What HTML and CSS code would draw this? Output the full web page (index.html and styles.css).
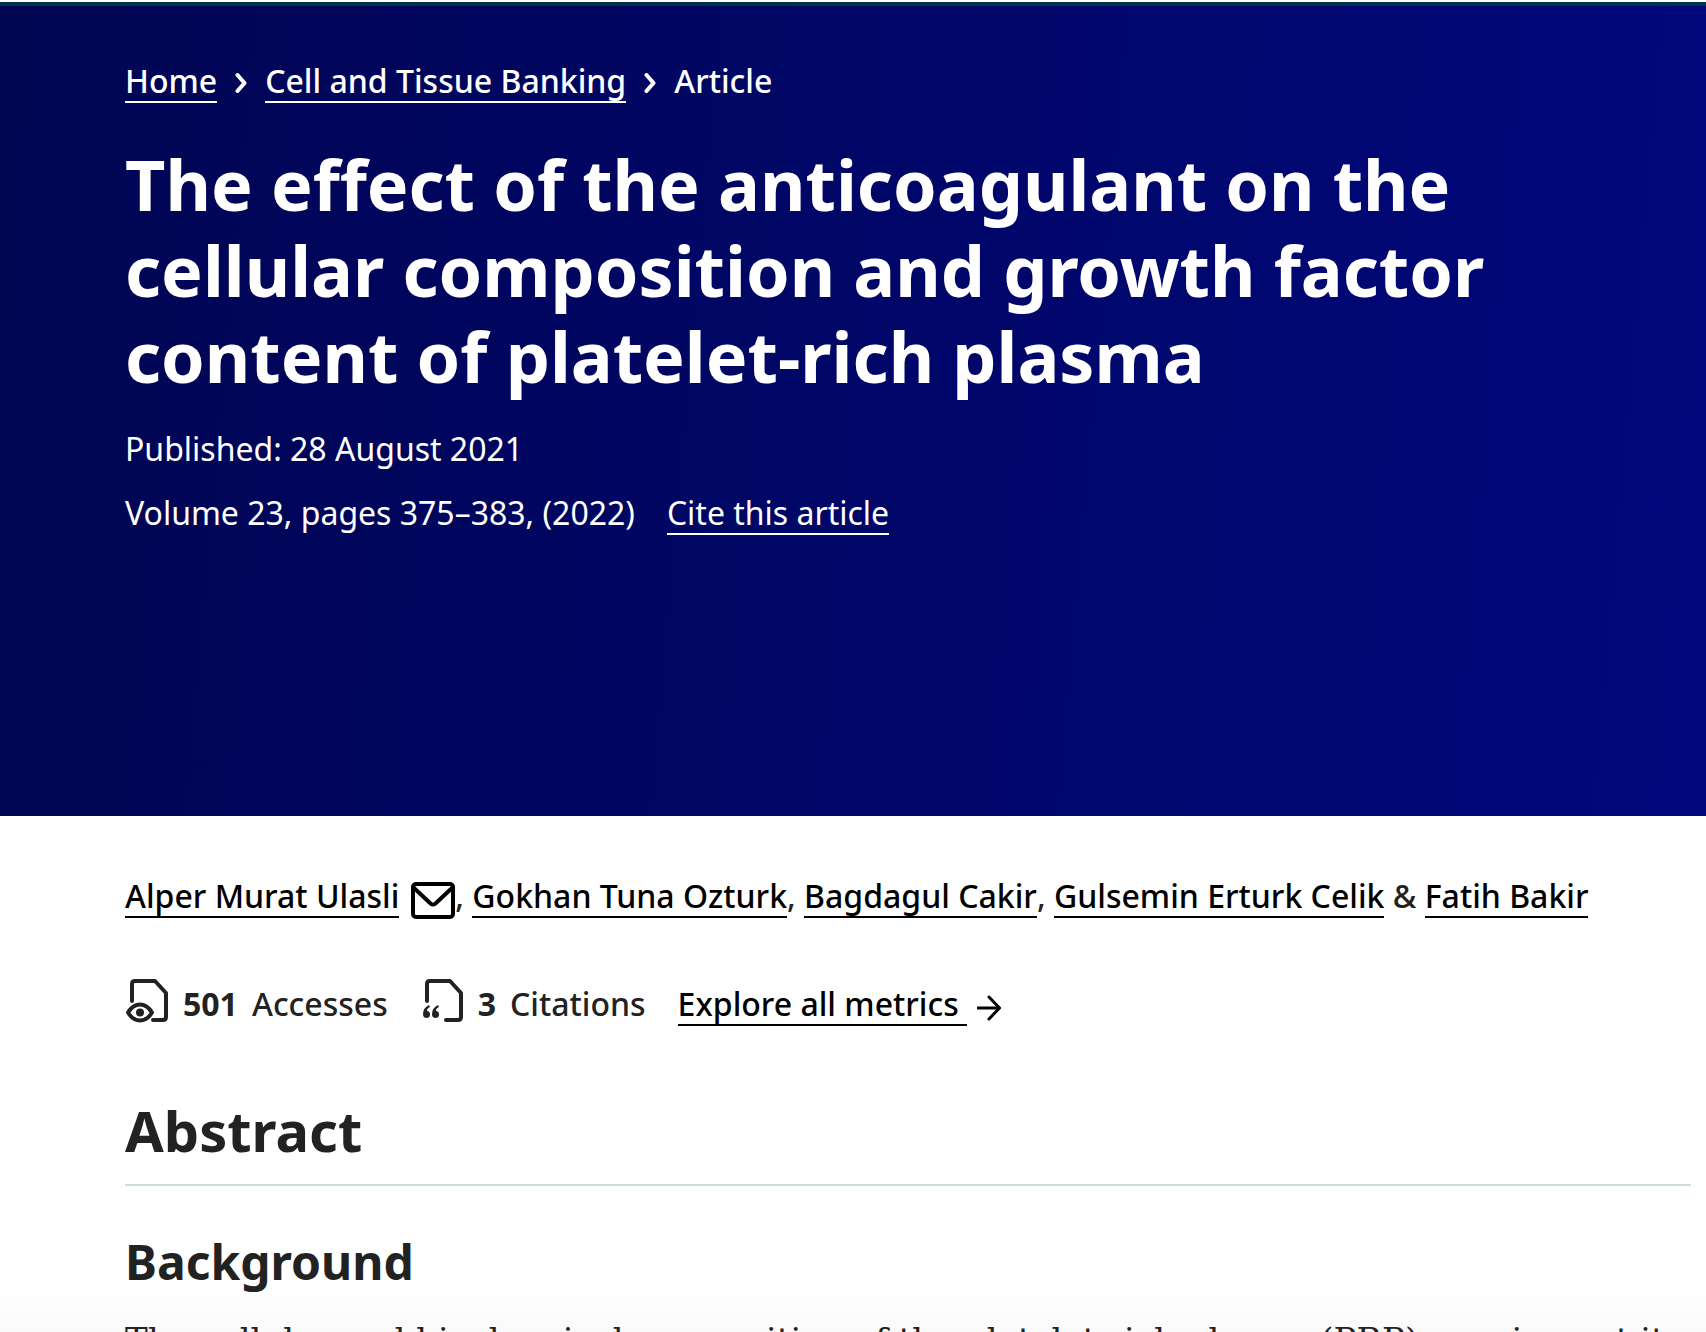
FILE: index.html
```html
<!DOCTYPE html>
<html lang="en">
<head>
<meta charset="utf-8">
<meta name="viewport" content="width=device-width, initial-scale=1">
<title>The effect of the anticoagulant on the cellular composition and growth factor content of platelet-rich plasma</title>
<link rel="stylesheet" href="styles.css">
</head>
<body>
<header class="hero">
  <nav class="breadcrumbs" aria-label="Breadcrumbs">
    <ol class="breadcrumbs-list">
      <li><a class="link" href="#">Home</a></li>
      <li><svg class="chevron" viewBox="0 0 12 20" aria-hidden="true"><path d="M2.500 2L9.500 10L2.500 18"/></svg><a class="link" href="#">Cell and Tissue Banking</a></li>
      <li><svg class="chevron" viewBox="0 0 12 20" aria-hidden="true"><path d="M2.500 2L9.500 10L2.500 18"/></svg>Article</li>
    </ol>
  </nav>
  <h1 class="title">The effect of the anticoagulant on the cellular composition and growth factor content of platelet-rich plasma</h1>
  <ul class="identifiers">
    <li>Published: <time datetime="2021-08-28">28 August 2021</time></li>
    <li class="volume"><span>Volume 23, pages 375–383, (2022)</span><a class="link" href="#">Cite this article</a></li>
  </ul>
</header>
<main class="article">
  <p class="authors"><a class="link" href="#">Alper Murat Ulasli</a><a class="mail" href="#" aria-label="Email Alper Murat Ulasli"><svg viewBox="0 0 44 40" aria-hidden="true"><rect x="2" y="4" width="40" height="33" rx="3"/><path d="M3 8l16.500 15.500q2.500 2 5 0L41 8"/></svg></a>, <a class="link" href="#">Gokhan Tuna Ozturk</a>, <a class="link" href="#">Bagdagul Cakir</a>, <a class="link" href="#">Gulsemin Erturk Celik</a> &amp; <a class="link" href="#">Fatih Bakir</a></p>
  <ul class="metrics">
    <li class="metric"><svg viewBox="-2 0 44 46" aria-hidden="true"><path d="M5 23V6q0-3 3-3h20l11 12v24q0 3-3 3h-10"/><path d="M1 34.500q5-8 12-8t12 8q-5 8-12 8t-12-8z"/><circle class="solid" cx="13" cy="34.500" r="4"/></svg><b>501</b> <span>Accesses</span></li>
    <li class="metric"><svg viewBox="-2 0 44 46" aria-hidden="true"><path d="M5 23V6q0-3 3-3h20l11 12v24q0 3-3 3h-12"/><path class="solid" d="M7 27q-6 3-6 9q0 4 3.500 4t3.500-3.500t-3-3.500q0-3 3-4zM16 27q-6 3-6 9q0 4 3.500 4t3.500-3.500t-3-3.500q0-3 3-4z"/></svg><b>3</b> <span>Citations</span></li>
    <li class="explore"><a href="#"><span class="link">Explore all metrics&nbsp;</span><svg viewBox="0 0 24 26" aria-hidden="true"><path d="M1 13h21M12 2l10.500 11L12 24"/></svg></a></li>
  </ul>
  <section>
    <h2 class="section-title">Abstract</h2>
    <h3 class="subtitle">Background</h3>
    <p class="text">The cellular and biochemical composition of the platelet-rich plasma (PRP) may impact its</p>
  </section>
</main>
</body>
</html>
```
FILE: styles.css
```css
* { box-sizing: border-box; }

body {
  margin: 0;
  height: 100vh;
  overflow: hidden;
  border-top: 2px solid #fff;
  background: linear-gradient(#fff, #fff) top / 100% calc(100% - 50px) no-repeat, linear-gradient(to top, #fafafa, #fff 50px);
  color: #222;
  font-family: "Noto Sans", "Open Sans", sans-serif;
  font-size: 32px;
  line-height: 48px;
}

ul, ol { margin: 0; padding: 0; list-style: none; }
h1, h2, h3, p { margin: 0; }
a { color: inherit; text-decoration: none; }
svg { fill: none; stroke: currentColor; stroke-linecap: round; stroke-linejoin: round; }
.solid { fill: currentColor; stroke: none; }

.link { display: inline-block; height: 44px; line-height: 44px; border-bottom: 2px solid currentColor; }

.hero {
  min-height: 814px;
  padding: 51px 125px 32px;
  border-top: 4px solid #01324b;
  background: linear-gradient(95deg, #000552, #00087c);
  color: #fff;
}

.breadcrumbs-list { display: flex; flex-wrap: wrap; font-weight: 500; }
.breadcrumbs-list li { display: flex; align-items: center; }
.chevron { width: 12px; height: 20px; margin: 4px 18px 0; stroke-width: 4px; }

.title {
  max-width: 1400px;
  margin-top: 36px;
  font-size: 70px;
  font-weight: 700;
  line-height: 86px;
}

.identifiers { display: grid; gap: 16px; margin-top: 26px; }
.volume { display: flex; flex-wrap: wrap; align-items: baseline; column-gap: 32px; }

.article { padding: 56px 15px 0 125px; }
.authors { font-weight: 500; }
.authors .link, .explore { color: #000; }
.mail svg { width: 44px; height: 40px; margin-left: 12px; vertical-align: -12px; stroke: #000; stroke-width: 4px; }

.metrics { display: flex; flex-wrap: wrap; align-items: center; gap: 32px; margin-top: 58px; font-weight: 500; }
.metric { display: flex; align-items: center; gap: 14px; }
.metric svg { width: 44px; height: 46px; margin-bottom: 6px; stroke-width: 4px; }
.explore a { display: flex; align-items: center; gap: 10px; }
.explore svg { width: 24px; height: 26px; margin-top: 8px; stroke-width: 3px; }

.section-title {
  margin-top: 64px;
  padding-bottom: 18px;
  border-bottom: 2px solid #cedbe0;
  font-size: 56px;
  line-height: 72px;
}
.subtitle { margin-top: 46px; font-size: 48px; line-height: 60px; }
.text { margin-top: 16px; font-family: "DejaVu Serif", serif; font-size: 34px; line-height: 64px; white-space: nowrap; }
```
